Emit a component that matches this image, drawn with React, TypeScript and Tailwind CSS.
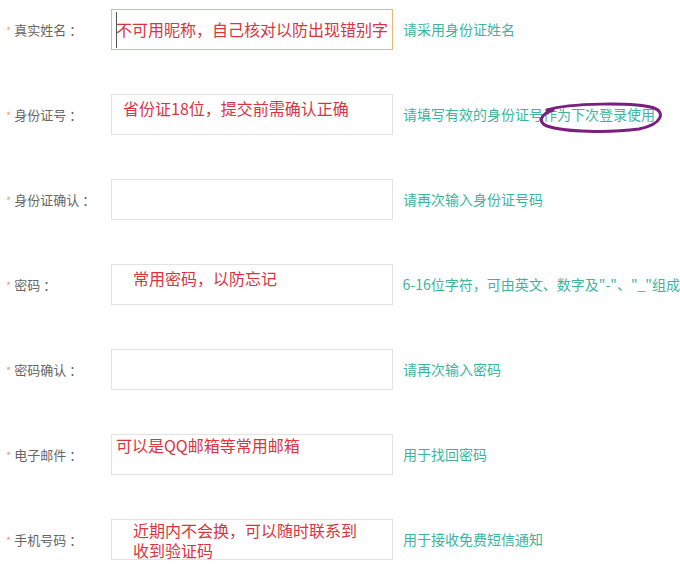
const font = { fontFamily: '"Noto Sans CJK SC", "Microsoft YaHei", sans-serif' };

interface Row {
  label: string;
  hint: string;
  note?: string[];
  noteClass?: string;
  focused?: boolean;
}

const rows: Row[] = [
  { label: "真实姓名", hint: "请采用身份证姓名", note: ["不可用昵称，自己核对以防出现错别字"], noteClass: "pt-[9px] pl-[4px]", focused: true },
  { label: "身份证号", hint: "请填写有效的身份证号作为下次登录使用", note: ["省份证18位，提交前需确认正确"], noteClass: "pt-[3px] pl-[11px]" },
  { label: "身份证确认", hint: "请再次输入身份证号码" },
  { label: "密码", hint: "6-16位字符，可由英文、数字及\"-\"、\"_\"组成", note: ["常用密码，以防忘记"], noteClass: "pt-[3px] pl-[21px]" },
  { label: "密码确认", hint: "请再次输入密码" },
  { label: "电子邮件", hint: "用于找回密码", note: ["可以是QQ邮箱等常用邮箱"], noteClass: "pt-[0px] pl-[4px]" },
  { label: "手机号码", hint: "用于接收免费短信通知", note: ["近期内不会换，可以随时联系到", "收到验证码"], noteClass: "pt-[0px] pl-[21px]" },
];

export default function App() {
  return (
    <div className="w-[680px] h-[584px] bg-white overflow-hidden pt-[9px]" style={font}>
      <div className="flex flex-col gap-[44px]">
        {rows.map((r, i) => (
          <div key={i} className="flex items-center h-[41px] whitespace-nowrap">
            <div className="w-[111px] pl-[6px] flex items-center text-[13px] text-[#666]">
              <span className="text-[#f29c7e] text-[11px] mr-[3px] mt-[1px]">*</span>
              <span>{r.label}</span>
              <span className="ml-[3px]">：</span>
            </div>
            <div
              className={`relative w-[282px] h-[41px] border ${
                r.focused ? "border-[#e8b96a]" : "border-[#e3e3e3]"
              }`}
            >
              {r.focused && (
                <span className="absolute left-[4px] top-[2px] w-[1px] h-[36px] bg-[#555]" />
              )}
              {r.note && (
                <div className={`text-[16px] leading-[20px] text-[#d9343f] ${r.noteClass}`}>
                  {r.note.map((l, j) => (
                    <div key={j}>{l}</div>
                  ))}
                </div>
              )}
            </div>
            <div className="relative ml-[10px] text-[14px] text-[#3db59c]">
              {r.hint}
              {i === 1 && (
                <svg
                  className="absolute left-[136px] top-[-2px]"
                  width="126"
                  height="32"
                  viewBox="0 0 126 32"
                  fill="none"
                >
                  <path
                    d="M8 8 C 30 1, 95 0, 115 6 C 126 10, 124 22, 100 27 C 70 31, 25 30, 8 24 C -2 20, 2 12, 14 8"
                    stroke="#7b1f7e"
                    strokeWidth="3"
                    strokeLinecap="round"
                  />
                </svg>
              )}
            </div>
          </div>
        ))}
      </div>
    </div>
  );
}
